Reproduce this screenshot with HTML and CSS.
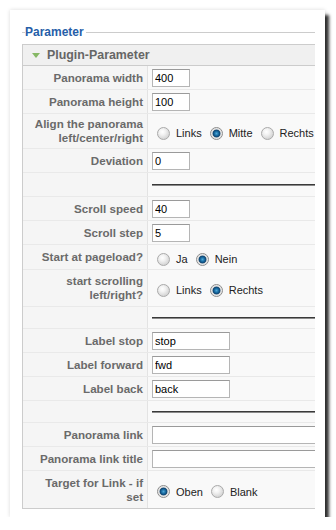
FILE: index.html
```html
<!DOCTYPE html>
<html>
<head>
    <meta charset="UTF-8">
    <title>Parameter</title>
    <link rel="stylesheet" href="styles.css">
</head>
<body>
<div id="wrap">
    <div class="legend"><span class="tick"></span><span class="title">Parameter</span><span class="line"></span></div>
    <div class="clip">
        <div class="pane">
            <div class="pane-title"><span class="arrow"></span>Plugin-Parameter</div>

            <div class="row"><div class="key">Panorama width</div><div class="val"><input class="txt s" type="text" value="400"></div></div>
            <div class="row"><div class="key">Panorama height</div><div class="val"><input class="txt s" type="text" value="100"></div></div>
            <div class="row two"><div class="key">Align the panorama left/center/right</div>
                <div class="val radios">
                    <input type="radio" name="align" id="a1"><label for="a1">Links</label>
                    <input type="radio" name="align" id="a2" checked><label for="a2">Mitte</label>
                    <input type="radio" name="align" id="a3"><label for="a3">Rechts</label>
                </div>
            </div>
            <div class="row"><div class="key">Deviation</div><div class="val"><input class="txt s" type="text" value="0"></div></div>
            <div class="row spacer first"><div class="key"></div><div class="val"><hr></div></div>

            <div class="row"><div class="key">Scroll speed</div><div class="val"><input class="txt s" type="text" value="40"></div></div>
            <div class="row"><div class="key">Scroll step</div><div class="val"><input class="txt s" type="text" value="5"></div></div>
            <div class="row one"><div class="key">Start at pageload?</div>
                <div class="val radios">
                    <input type="radio" name="start" id="b1"><label for="b1">Ja</label>
                    <input type="radio" name="start" id="b2" checked><label for="b2">Nein</label>
                </div>
            </div>
            <div class="row two tall"><div class="key">start scrolling left/right?</div>
                <div class="val radios">
                    <input type="radio" name="dir" id="c1"><label for="c1">Links</label>
                    <input type="radio" name="dir" id="c2" checked><label for="c2">Rechts</label>
                </div>
            </div>
            <div class="row spacer"><div class="key"></div><div class="val"><hr></div></div>

            <div class="row"><div class="key">Label stop</div><div class="val"><input class="txt m" type="text" value="stop"></div></div>
            <div class="row"><div class="key">Label forward</div><div class="val"><input class="txt m" type="text" value="fwd"></div></div>
            <div class="row"><div class="key">Label back</div><div class="val"><input class="txt m" type="text" value="back"></div></div>
            <div class="row spacer"><div class="key"></div><div class="val"><hr></div></div>

            <div class="row"><div class="key">Panorama link</div><div class="val"><input class="txt l" type="text" value=""></div></div>
            <div class="row"><div class="key">Panorama link title</div><div class="val"><input class="txt l" type="text" value=""></div></div>
            <div class="row two tall last"><div class="key">Target for Link - if set</div>
                <div class="val radios">
                    <input type="radio" name="target" id="d1" checked><label for="d1">Oben</label>
                    <input type="radio" name="target" id="d2"><label for="d2">Blank</label>
                </div>
            </div>
        </div>
    </div>
</div>
</body>
</html>
```

FILE: styles.css
```css
* {
    margin: 0;
    padding: 0;
    box-sizing: border-box;
}
body {
    background-color: #fff;
    font-family: "Liberation Sans", Arial, sans-serif;
    font-size: 11px;
}
#wrap {
    width: 315px;
    height: 507px;
    margin: 10px 0 0 10px;
    padding: 15px 0 0 12px;
    background-color: #fff;
    box-shadow: 4px 5px 3px rgba(0, 0, 0, .8), 0 0 4px rgba(0, 0, 0, .15);
}
#wrap .legend {
    display: flex;
    align-items: center;
    width: 293px;
    height: 14px;
}
#wrap .legend .tick {
    width: 3px;
    border-top: 1px solid #ccc;
}
#wrap .legend .title {
    padding: 0 2px 0 0;
    color: #265ea8;
    font-size: 12px;
    font-weight: bold;
}
#wrap .legend .line {
    flex: 1;
    border-top: 1px solid #ccc;
}
#wrap .clip {
    width: 293px;
    margin-top: 5px;
    overflow: hidden;
}
#wrap .pane {
    width: 310px;
    border: 1px solid #ccc;
    background-color: #f9f9f9;
}
#wrap .pane-title {
    display: flex;
    align-items: center;
    height: 21px;
    padding-left: 9px;
    border-bottom: 1px solid #ccc;
    background-color: #f0f0f0;
    color: #666;
    font-size: 12.4px;
    font-weight: bold;
}
#wrap .pane-title .arrow {
    width: 0;
    height: 0;
    margin: 1px 7px 0 0;
    border-left: 4px solid transparent;
    border-right: 4px solid transparent;
    border-top: 5px solid #86b865;
}
#wrap .row {
    display: flex;
    min-height: 24px;
    border-bottom: 1px solid #e9e9e9;
}
#wrap .row.two {
    min-height: 35px;
}
#wrap .row.tall {
    min-height: 37px;
}
#wrap .row.one {
    min-height: 25px;
}
#wrap .row.spacer {
    min-height: 22px;
}
#wrap .row.spacer.first {
    min-height: 24px;
}
#wrap .row.last {
    border-bottom: none;
}
#wrap .key {
    display: flex;
    flex-shrink: 0;
    align-items: center;
    justify-content: flex-end;
    width: 125px;
    padding: 3px 4px 3px 5px;
    border-right: 1px solid #e3e3e3;
    background-color: #f5f5f5;
    color: #6a6a6a;
    font-size: 11.6px;
    font-weight: bold;
    line-height: 14px;
    text-align: right;
}
#wrap .val {
    display: flex;
    flex: 1;
    align-items: center;
    min-width: 0;
    padding-left: 4px;
    color: #333;
}
#wrap .val.radios {
    padding-top: 4px;
}
#wrap .val hr {
    width: 100%;
    height: 0;
    border: none;
    border-top: 1px solid #3a3a3a;
    border-bottom: 1px solid #8a8a8a;
}
#wrap .txt {
    height: 18px;
    padding: 0 2px;
    border: 1px solid #b5b5b5;
    border-top-color: #9a9a9a;
    background-color: #fff;
    color: #000;
    font-family: "Liberation Sans", Arial, sans-serif;
    font-size: 11px;
    outline: none;
}
#wrap .txt.s {
    width: 38px;
}
#wrap .txt.m {
    width: 78px;
}
#wrap .txt.l {
    width: 200px;
    flex-shrink: 0;
}
#wrap input[type="radio"] {
    -webkit-appearance: none;
    appearance: none;
    flex-shrink: 0;
    width: 13px;
    height: 13px;
    margin: 0 6px 0 5px;
    border: 1px solid #aaa;
    border-radius: 50%;
    background: radial-gradient(circle at 40% 35%, #fff 0, #f2f2f2 3px, #d6d6d6 7px);
}
#wrap input[type="radio"]:checked {
    border-color: #8c8c8c;
    background: radial-gradient(circle at 50% 50%, #4fa6d6 0, #1a6ea4 2px, #0e4370 3.5px, #d9d9d9 4.3px, #eee 5.5px);
}
#wrap .val label {
    margin-right: 3px;
    color: #222;
}
```
